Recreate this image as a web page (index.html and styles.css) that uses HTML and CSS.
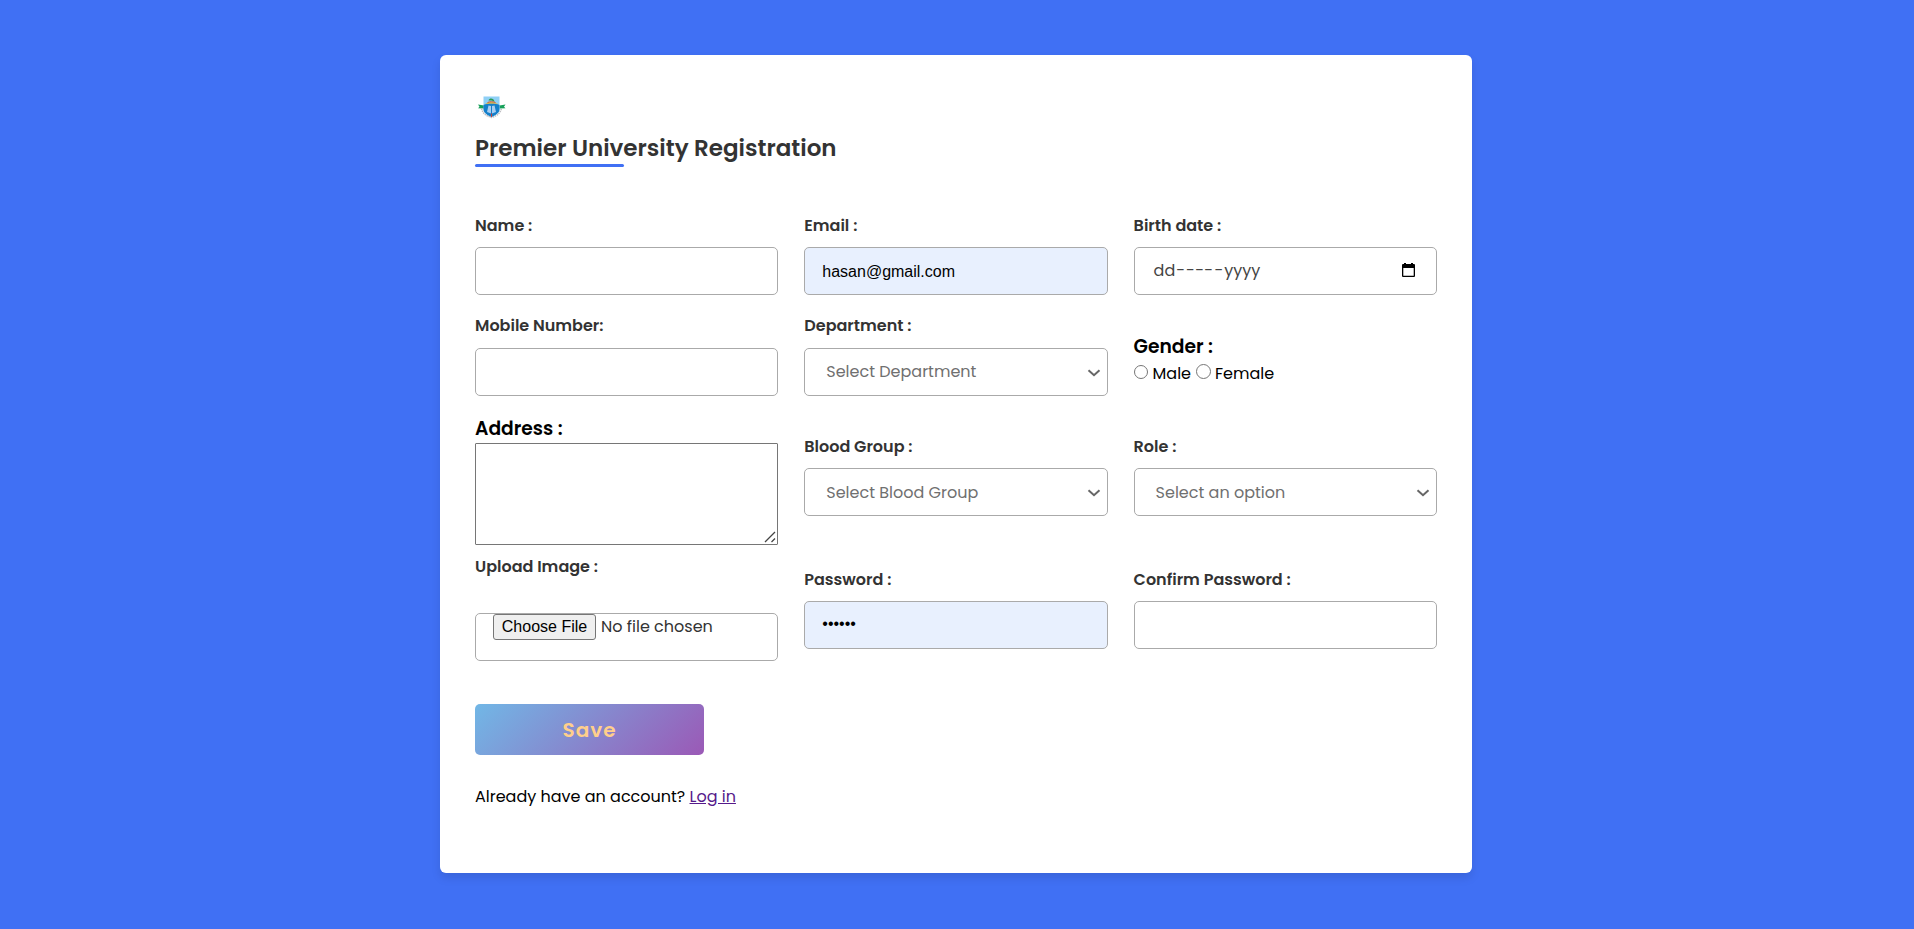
FILE: index.html
```html
<!DOCTYPE html>
<html lang="en">
<head>
<meta charset="utf-8">
<title>Premier University Registration</title>
<link rel="stylesheet" href="styles.css">
</head>
<body>
<main class="card">
  <svg class="logo" viewBox="0 0 34 26" width="34" height="26">
    <path d="M3 9.500l6 1v3l-6-.2 1.500-1.500zM30.500 9.500l-6 1v3l6-.2-1.500-1.500z" fill="#18a05a"/>
    <path d="M6.500 13.500c1.500 5 4 7 10 9 6-2 8.500-4 10-9" fill="none" stroke="#bdbdc1" stroke-width="1.500" stroke-dasharray="1.500 .7"/>
    <path d="M8.500 1.500h16v12.500c0 4-4 6-8 8-4-2-8-4-8-8z" fill="#8fd0f6"/>
    <path d="M8.500 10c4-2 12-2 16 0v4c0 4-4 6-8 8-4-2-8-4-8-8z" fill="#147fca"/>
    <path d="M13.500 10.500l2.500.5v7.500l-4-1.500zM19.500 10.500l-2.500.5v7.500l4-1.500z" fill="#a9cdf0"/>
    <path d="M10 9c3-2.500 10-2.500 13 0-3-.8-10-.8-13 0z" fill="#f2b31f"/>
    <path d="M12.500 7.500c2-1 6-1 8 0" fill="none" stroke="#d8552e" stroke-width="1"/>
    <path d="M13.500 5.500c1-3 5.500-2.500 6 1.300-2-1.500-4-1.500-6-1.300z" fill="#2c9a55"/>
    <path d="M16.500 18.500v3.500" stroke="#c8403a" stroke-width="1"/>
  </svg>
  <h1 class="title">Premier University Registration</h1>
  <form class="form">
    <div class="grid">
      <div class="field"><label class="label">Name :</label><input class="input" type="text"></div>
      <div class="field"><label class="label">Email :</label><input class="input filled email" type="text" value="hasan@gmail.com"></div>
      <div class="field"><label class="label">Birth date :</label>
        <div class="input date"><span class="date-text"><span>dd</span><span class="dash">-</span><span class="month">---</span><span class="dash">-</span><span>yyyy</span></span>
          <svg class="calendar" viewBox="0 0 13 14" width="13" height="14"><path d="M2 0h2v1h5V0h2v1h1q1 0 1 1v11q0 1-1 1H1q-1 0-1-1V2q0-1 1-1h1zM1.300 5v7.700h10.400V5z" fill="#000" fill-rule="evenodd"/></svg>
        </div></div>

      <div class="field"><label class="label raised">Mobile Number:</label><input class="input" type="text"></div>
      <div class="field"><label class="label raised">Department :</label>
        <div class="input select upper"><span>Select Department</span><svg class="chevron" viewBox="0 0 14 8" width="14" height="8"><path d="M1.500 1.200L7 6.200l5.500-5"/></svg></div></div>
      <div class="field gender"><h2 class="heading">Gender :</h2>
        <div class="radios"><input class="radio" type="radio" name="g"><span>Male</span><input class="radio second" type="radio" name="g"><span>Female</span></div></div>

      <div class="field"><h2 class="heading">Address :</h2>
        <div class="textarea"><svg class="grip" viewBox="0 0 12 12" width="12" height="12"><path d="M1 11L11 1M7.500 11L11 7.500"/></svg></div></div>
      <div class="field low"><label class="label">Blood Group :</label>
        <div class="input select"><span>Select Blood Group</span><svg class="chevron" viewBox="0 0 14 8" width="14" height="8"><path d="M1.500 1.200L7 6.200l5.500-5"/></svg></div></div>
      <div class="field low"><label class="label">Role :</label>
        <div class="input select"><span>Select an option</span><svg class="chevron" viewBox="0 0 14 8" width="14" height="8"><path d="M1.500 1.200L7 6.200l5.500-5"/></svg></div></div>

      <div class="field"><label class="label upload">Upload Image :</label>
        <div class="input file"><button class="choose" type="button">Choose File</button><span class="nofile">No file chosen</span></div></div>
      <div class="field mid"><label class="label">Password :</label><input class="input filled password" type="password" value="123456"></div>
      <div class="field mid"><label class="label">Confirm Password :</label><input class="input" type="password"></div>
    </div>
    <button class="save" type="button">Save</button>
    <p class="login">Already have an account? <a class="link" href="#">Log in</a></p>
  </form>
</main>
</body>
</html>
```
FILE: styles.css
```css
* { box-sizing: border-box; margin: 0; padding: 0; }
body {
  min-height: 929px;
  display: flex;
  align-items: flex-start;
  justify-content: center;
  padding: 55px 2px 0 0;
  overflow: hidden;
  background: #4070f4;
  font-family: Poppins, Inter, "Liberation Sans", sans-serif;
  font-size: 16px;
  color: #000;
}
.card {
  width: 1032px;
  height: 818px;
  padding: 38px 35px 0;
  border-radius: 6px;
  background: #fff;
  box-shadow: 0 5px 10px rgba(0, 0, 0, .1);
}
.logo { display: block; margin-top: 2px; }
.title {
  position: relative;
  height: 36px;
  margin-top: 6px;
  padding-top: 4px;
  font-size: 23px;
  font-weight: 600;
  line-height: 35px;
  color: #333;
  white-space: nowrap;
}
.title::after {
  content: "";
  position: absolute;
  left: 0;
  bottom: -4px;
  width: 149px;
  height: 3px;
  border-radius: 8px;
  background: #4070f4;
}
.form { margin-top: 49px; }
.grid {
  display: grid;
  grid-template-columns: repeat(3, 303.300px);
  grid-template-rows: 101px 101px 139px 108px;
  column-gap: 26px;
}
.field { display: flex; flex-direction: column; align-items: flex-start; }
.low { padding-top: 19px; }
.mid { padding-top: 13px; }
.label {
  height: 26px;
  margin-bottom: 9px;
  line-height: 27px;
  font-size: 16px;
  font-weight: 600;
  color: #333;
  white-space: nowrap;
}
.raised { line-height: 25px; }
.input {
  width: 100%;
  height: 48px;
  padding: 0 17px;
  border: 1px solid #aaa;
  border-radius: 5px;
  background: #fff;
  font-family: inherit;
  font-size: 16px;
  color: #333;
  white-space: nowrap;
}
.filled { background: #e8f0fe; font-family: "Liberation Sans", Arial, sans-serif; color: #000; }
.email { padding-top: 2px; }
.password { padding-bottom: 2px; }
.date { display: flex; align-items: center; justify-content: space-between; padding: 0 21px 0 19px; color: #444; }
.date-text { display: flex; margin-top: -2px; }
.dash { margin: 0 1px; }
.month { letter-spacing: .3px; }
.calendar { display: block; margin-top: -2px; }
.select { display: flex; align-items: center; justify-content: space-between; padding: 0 6px 0 21px; color: #707070; }
.upper { padding-bottom: 2px; }
.upper .chevron { margin-top: 4px; }
.chevron { display: block; margin-top: 2px; fill: none; stroke: #666; stroke-width: 2; }
.heading { height: 29px; font-size: 18.720px; font-weight: 600; line-height: 29px; white-space: nowrap; }
.gender { padding-top: 19px; }
.radios { display: flex; align-items: center; height: 24px; }
.radio { width: 14px; height: 14px; margin: 0 5px 3px 0; }
.second { width: 15px; height: 15px; margin: 0 4px 3px 5px; }
.textarea {
  display: flex;
  align-items: flex-end;
  justify-content: flex-end;
  width: 100%;
  height: 102px;
  padding: 1px;
  border: 1px solid #767676;
  border-radius: 1px;
  background: #fff;
}
.grip { fill: none; stroke: #444; stroke-width: 1.300; }
.upload { margin-bottom: 34px; }
.file { display: flex; align-items: flex-start; }
.choose {
  width: 103px;
  height: 26px;
  margin-right: 5px;
  border: 1px solid #767676;
  border-radius: 3px;
  background: #efefef;
  font: 16px "Liberation Sans", Arial, sans-serif;
}
.nofile { line-height: 25px; }
.save {
  display: block;
  width: 229px;
  height: 51px;
  margin-top: 43px;
  border: 0;
  border-radius: 5px;
  background: linear-gradient(135deg, #71b7e6, #9b59b6);
  font-family: inherit;
  font-size: 20px;
  font-weight: 600;
  letter-spacing: 1px;
  color: #ffcf8b;
}
.login { margin-top: 29px; height: 24px; line-height: 26px; white-space: nowrap; }
.link { color: #551a8b; }
```
